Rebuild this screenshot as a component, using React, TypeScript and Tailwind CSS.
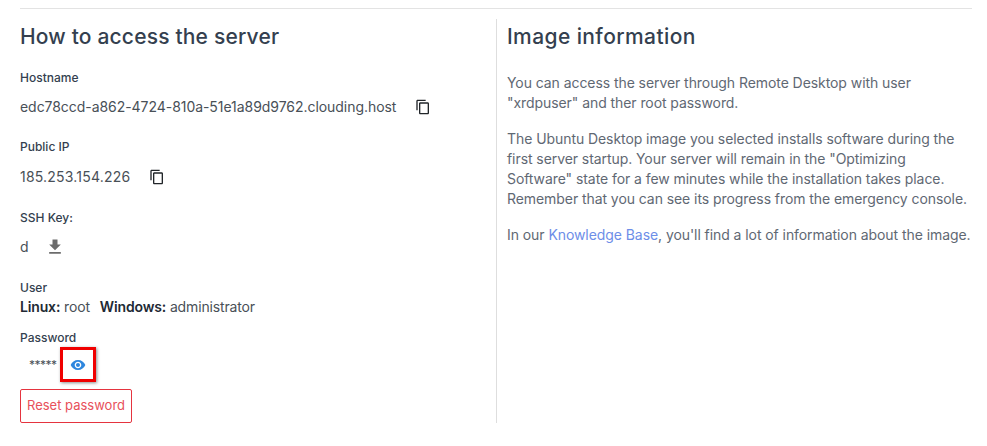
function CopyIcon() {
  return (
    <svg viewBox="0 0 24 24" className="w-4 h-4 fill-[#212529]">
      <path d="M16 1H4c-1.1 0-2 .9-2 2v14h2V3h12V1zm3 4H8c-1.1 0-2 .9-2 2v14c0 1.1.9 2 2 2h11c1.1 0 2-.9 2-2V7c0-1.1-.9-2-2-2zm0 16H8V7h11v14z" />
    </svg>
  );
}

export default function App() {
  return (
    <div className="w-[987px] h-[446px] bg-white font-['Inter',sans-serif] text-[#495057] pt-2 px-5 overflow-hidden">
      <div className="w-[952px] border-t border-[#e3e3e3] pt-[10px] flex">
        <section className="w-[477px] h-[404px] shrink-0 border-r border-[#dedede]">
          <h2 className="pt-px text-[21px] leading-[34px] font-medium text-[#343f4f] tracking-[0.18px]">
            How to access the server
          </h2>

          <div className="mt-[15px] text-xs leading-[18px] font-medium text-[#343f4f]">Hostname</div>
          <div className="mt-[10px] flex items-center h-[20px] text-sm tracking-[-0.05px]">
            <span>edc78ccd-a862-4724-810a-51e1a89d9762.clouding.host</span>
            <span className="ml-[19px]"><CopyIcon /></span>
          </div>

          <div className="mt-[21px] text-xs leading-[18px] font-medium text-[#343f4f]">Public IP</div>
          <div className="mt-[11px] flex items-center h-[20px] text-sm tracking-[0.2px]">
            <span>185.253.154.226</span>
            <span className="ml-[19px]"><CopyIcon /></span>
          </div>

          <div className="mt-[22px] text-xs leading-[18px] font-medium text-[#343f4f]">SSH Key:</div>
          <div className="mt-[10px] flex items-center h-[20px] text-sm">
            <span>d</span>
            <svg viewBox="0 0 24 24" className="ml-[16px] w-5 h-5 fill-[#6c6c6c]">
              <path d="M19 9h-4V3H9v6H5l7 7 7-7zM5 18v2h14v-2H5z" />
            </svg>
          </div>

          <div className="mt-[22px] text-xs leading-[18px] font-medium text-[#343f4f]">User</div>
          <div className="flex h-[20px] items-center text-sm tracking-[-0.15px]">
            <span><b className="font-semibold text-[#212934]">Linux:</b> root</span>
            <span className="ml-[10px]"><b className="font-semibold text-[#212934]">Windows:</b> administrator</span>
          </div>

          <div className="mt-[12px] text-xs leading-[18px] font-medium text-[#343f4f]">Password</div>
          <div className="flex items-center">
            <span className="ml-[9px] text-xs leading-[18px] tracking-[-0.5px] w-[31px]">*****</span>
            <button className="w-[36px] h-[35px] border-[3px] border-[#f00000] shadow-[1px_1px_3px_rgba(0,0,0,0.45)] flex items-center justify-center">
              <svg viewBox="0 0 24 24" className="w-4 h-4 fill-[#2e86de]">
                <path d="M12 4.5C7 4.5 2.73 7.61 1 12c1.73 4.39 6 7.5 11 7.5s9.27-3.11 11-7.5c-1.73-4.39-6-7.5-11-7.5zM12 17c-2.76 0-5-2.24-5-5s2.24-5 5-5 5 2.24 5 5-2.24 5-5 5zm0-8c-1.66 0-3 1.34-3 3s1.34 3 3 3 3-1.34 3-3-1.34-3-3-3z" />
              </svg>
            </button>
          </div>
          <button className="mt-[7px] h-[34px] w-[112px] border border-[#e5343f] rounded-[2px] text-[13px] text-[#e8505a]">
            Reset password
          </button>
        </section>

        <section className="pl-[10px] flex-1 text-[#5f6873] text-sm leading-[20px] tracking-[-0.07px]">
          <h2 className="pt-px text-[21px] leading-[34px] font-medium text-[#343f4f] tracking-[0.4px]">
            Image information
          </h2>
          <p className="mt-[19px]">
            You can access the server through Remote Desktop with user
            <br />
            "xrdpuser" and ther root password.
          </p>
          <p className="mt-[16px]">
            The Ubuntu Desktop image you selected installs software during the
            <br />
            first server startup. Your server will remain in the "Optimizing
            <br />
            Software" state for a few minutes while the installation takes place.
            <br />
            Remember that you can see its progress from the emergency console.
          </p>
          <p className="mt-[16px] whitespace-nowrap">
            In our <a className="text-[#6d8ee8]">Knowledge Base</a>, you'll find a lot of information about the image.
          </p>
        </section>
      </div>
    </div>
  );
}
